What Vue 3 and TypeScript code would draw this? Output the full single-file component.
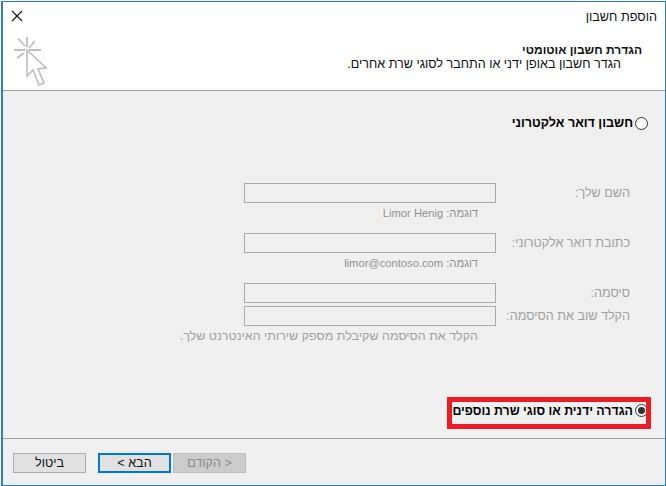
<script setup lang="ts">
const fields = [
  { label: 'השם שלך:', hint: 'דוגמה: Limor Henig', cls: 'f1' },
  { label: 'כתובת דואר אלקטרוני:', hint: 'דוגמה: limor@contoso.com', cls: 'f2' },
  { label: 'סיסמה:', hint: '', cls: 'f3' },
  { label: 'הקלד שוב את הסיסמה:', hint: 'הקלד את הסיסמה שקיבלת מספק שירותי האינטרנט שלך.', cls: 'f4' },
]
</script>

<template>
  <div class="window" dir="rtl">
    <header class="head">
      <div class="titlebar">
        <span class="title">הוספת חשבון</span>
        <svg class="close" width="12" height="12" viewBox="0 0 12 12"><path d="M1 1 L11 11 M11 1 L1 11" stroke="#111" stroke-width="1.1" fill="none" /></svg>
      </div>
      <div class="banner">
        <div class="banner-text">
          <div class="banner-h">הגדרת חשבון אוטומטי</div>
          <div class="banner-s">הגדר חשבון באופן ידני או התחבר לסוגי שרת אחרים.</div>
        </div>
        <svg class="cursor" width="38" height="52" viewBox="0 0 38 52" fill="none" stroke="#bdbdbd" stroke-width="1.8">
          <path d="M17 2 V12 M4 15 H15 M19 15 H31 M8 3.5 L15 11 M25 6 L19 13 M7 23 L14 18" />
          <path d="M17 15 V41 L23 35 L29 50 L34 48 L28 34 L36 33 Z" stroke-width="1.6" />
        </svg>
      </div>
    </header>

    <main class="body">
      <label class="radio r1"><span class="dot"></span><b>חשבון דואר אלקטרוני</b></label>
      <div class="form">
        <div v-for="f in fields" :key="f.cls" class="field" :class="f.cls">
          <span class="lbl">{{ f.label }}</span>
          <span class="input"></span>
          <span v-if="f.hint" class="hint">{{ f.hint }}</span>
        </div>
      </div>
      <div class="manual">
        <label class="radio r2"><span class="dot on"></span><b>הגדרה ידנית או סוגי שרת נוספים</b></label>
        <span class="mark"></span>
      </div>
    </main>

    <footer class="foot">
      <button class="btn disabled">&lt; הקודם</button>
      <button class="btn primary">הבא &gt;</button>
      <button class="btn cancel">ביטול</button>
    </footer>
  </div>
</template>

<style>
html, body { margin: 0; background: #fff; }
</style>

<style scoped>
.window {
  box-sizing: border-box;
  width: 665px;
  height: 485px;
  margin: 1px 0 0 1px;
  border: 1px solid #2b7cd3;
  border-left-width: 2px;
  background: #f0f0f0;
  display: flex;
  flex-direction: column;
  font-family: "Liberation Sans", "DejaVu Sans", sans-serif;
  font-size: 12px;
  color: #111;
}
.head { height: 88px; background: #fff; border-bottom: 1px solid #a0a0a0; flex: none; }
.titlebar { height: 28px; display: flex; align-items: center; justify-content: space-between; padding: 0 8px 0 8px; }
.title { font-size: 12.7px; margin-top: 2px; }
.close { flex: none; }
.banner { display: flex; justify-content: space-between; padding: 0 0 0 7px; height: 60px; }
.banner-h { font-weight: 700; margin: 13px 0 0; padding-right: 23px; line-height: 14px; }
.banner-s { padding-right: 44px; line-height: 15px; font-size: 12.6px; }
.cursor { margin-top: 5px; flex: none; }
.body { flex: 1; display: flex; flex-direction: column; }
.radio { display: flex; align-items: center; gap: 2px; color: #000; }
.dot { box-sizing: border-box; width: 13px; height: 13px; border-radius: 50%; border: 1px solid #333; background: #fff; flex: none; position: relative; }
.dot.on::after { content: ""; position: absolute; inset: 2px; border-radius: 50%; background: #333; }
.r1 { margin: 25px 17px 0 0; font-size: 12.6px; }
.form { margin-top: 53px; }
.field { display: grid; grid-template-columns: 169px 252px; justify-content: start; align-items: center; }
.lbl { grid-column: 1; grid-row: 1; text-align: right; padding-right: 35px; color: #a0a0a0; font-size: 12.6px; white-space: nowrap; }
.input { box-sizing: border-box; height: 20px; border: 1px solid #ababab; background: #f0f0f0; grid-column: 2; grid-row: 1; }
.hint { grid-column: 2; font-size: 11.2px; padding-right: 18px; margin-top: 3px; line-height: 14px; color: #909090; white-space: nowrap; }
.f1, .f2 { margin-bottom: 13px; }
.f3 { margin-bottom: 3px; }
.f4 .hint { color: #a0a0a0; font-size: 12.5px; }
.manual { margin: auto 17px 21px 0; align-self: flex-start; position: relative; }
.r2 { height: 13px; font-size: 12.4px; white-space: nowrap; }
.mark { position: absolute; box-sizing: border-box; top: -7px; bottom: -12px; left: -5px; right: -3px; border: 5px solid #ed1c24; }
.foot { box-sizing: border-box; flex: none; height: 47px; border-top: 1px solid #a0a0a0; display: flex; direction: ltr; flex-direction: row-reverse; justify-content: flex-start; align-items: flex-start; padding: 14px 419px 0 0; }
.btn { box-sizing: border-box; width: 73px; height: 20px; padding: 0; font: 12.6px "Liberation Sans", sans-serif; border: 1px solid #adadad; background: #e1e1e1; color: #111; direction: rtl; }
.disabled { background: #ccc; border-color: #bfbfbf; color: #8a8a8a; margin-left: 2px; }
.primary { border: 2px solid #0078d7; }
.cancel { margin-right: 12px; }
</style>
